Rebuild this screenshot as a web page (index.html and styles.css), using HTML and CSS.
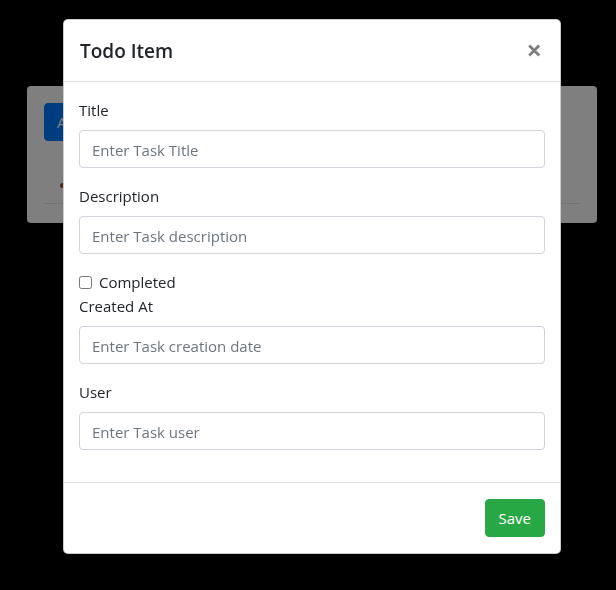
FILE: index.html
```html
<!DOCTYPE html>
<html>
<head>
<meta charset="utf-8">
<link rel="stylesheet" href="styles.css">
</head>
<body>
<div class="page">
  <div class="card">
    <button class="btn btn-primary">Add Todo</button>
    <div class="list-row"><span class="dot"></span></div>
  </div>
</div>
<div class="backdrop"></div>
<div class="modal">
  <div class="modal-header">
    <h5 class="modal-title">Todo Item</h5>
    <button class="close" aria-label="Close">&times;</button>
  </div>
  <div class="modal-body">
    <div class="form-group">
      <label class="label">Title</label>
      <input class="form-control" placeholder="Enter Task Title">
    </div>
    <div class="form-group">
      <label class="label">Description</label>
      <input class="form-control" placeholder="Enter Task description">
    </div>
    <div class="check">
      <input type="checkbox" class="checkbox" id="c1">
      <label for="c1">Completed</label>
    </div>
    <div class="form-group">
      <label class="label">Created At</label>
      <input class="form-control" placeholder="Enter Task creation date">
    </div>
    <div class="form-group">
      <label class="label">User</label>
      <input class="form-control" placeholder="Enter Task user">
    </div>
  </div>
  <div class="modal-footer">
    <button class="btn btn-success">Save</button>
  </div>
</div>
</body>
</html>
```
FILE: styles.css
```css
* { box-sizing: border-box; }
html, body { margin: 0; padding: 0; }
body {
  background: #000;
  font-family: "Open Sans", "Noto Sans", sans-serif;
  font-size: 15px;
  line-height: 24px;
  color: #212529;
  width: 616px;
  height: 590px;
  overflow: hidden;
}
.page { padding: 86px 19px 0 27px; }
.card {
  background: #fff;
  border-radius: 4px;
  height: 137px;
  padding: 17px 17px 0 17px;
}
.btn {
  display: inline-block;
  font-family: inherit;
  font-size: 15px;
  line-height: 24px;
  padding: 6px 12px;
  border: 1px solid transparent;
  border-radius: 4px;
  color: #fff;
}
.btn-primary { background: #007bff; border-color: #007bff; }
.btn-success { background: #28a745; border-color: #28a745; padding: 6px 13px; }
.list-row {
  margin-top: 27px;
  height: 36px;
  border-bottom: 1px solid #dee2e6;
  position: relative;
}
.dot {
  position: absolute; left: 16px; top: 15px;
  width: 5px; height: 5px; border-radius: 50%; background: #a0522d;
}
.backdrop {
  position: fixed; inset: 0; background: rgba(0,0,0,.5);
}
.modal {
  position: fixed;
  left: 63px; top: 19px;
  width: 498px;
  background: #fff;
  border: 1px solid rgba(0,0,0,.2);
  border-radius: 5px;
}
.modal-header {
  display: flex; align-items: flex-start; justify-content: space-between;
  padding: 16px 16px 15px;
  border-bottom: 1px solid #dee2e6;
}
.modal-title { margin: 0; font-size: 19px; font-weight: 600; line-height: 30px; }
.close {
  background: none; border: 0; padding: 0 2px 0 0; margin-top: -1px;
  font-family: "Open Sans", sans-serif;
  font-size: 27px; font-weight: 700; line-height: 30px;
  color: #000; opacity: .5;
}
.modal-body { padding: 16px 15px 16px; }
.form-group { margin-bottom: 16px; }
.label { display: block; margin-bottom: 8px; }
.form-control {
  display: block; width: 100%; height: 38px;
  padding: 7px 12px 5px;
  font-family: inherit; font-size: 15px; line-height: 24px;
  color: #495057;
  border: 1px solid #ced4da; border-radius: 4px;
  background: #fff;
}
.form-control::placeholder { color: #6c757d; }
.check { display: flex; align-items: center; height: 24px; }
.checkbox { margin: 0 7px 0 0; width: 13px; height: 13px; }
.modal-footer {
  display: flex; justify-content: flex-end;
  padding: 12px;
  border-top: 1px solid #dee2e6;
}
.modal-footer .btn { margin: 4px 3px 4px 4px; }
```
